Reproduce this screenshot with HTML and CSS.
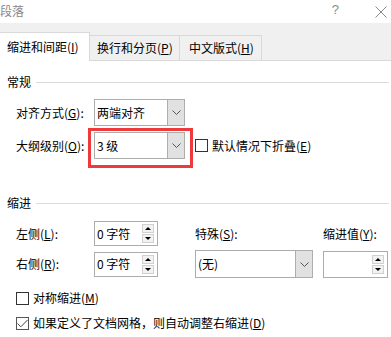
FILE: index.html
```html
<!DOCTYPE html>
<html lang="zh-CN">
<head>
    <meta charset="UTF-8">
    <meta name="viewport" content="width=device-width, initial-scale=1.0">
    <title>段落</title>
    <link rel="stylesheet" href="styles.css">
</head>
<body>

    <div class="dialog">
        <!-- Title bar -->
        <div class="titlebar">
            <span class="title">段落</span>
            <span class="help">?</span>
            <svg class="close" width="12" height="12" viewBox="0 0 12 12">
                <path d="M0.5 0.5 L11.5 11.5 M11.5 0.5 L0.5 11.5" stroke="#8a8a8a" stroke-width="1" fill="none"/>
            </svg>
        </div>

        <!-- Tabs -->
        <div class="tabs">
            <div class="tab active tab-1">缩进和间距(<u>I</u>)</div>
            <div class="tab tab-2">换行和分页(<u>P</u>)</div>
            <div class="tab tab-3">中文版式(<u>H</u>)</div>
        </div>

        <div class="panel">
            <!-- General -->
            <div class="group-title"><span>常规</span><i></i></div>

            <div class="form-rows">
                <div class="form-row">
                    <span class="field-label">对齐方式(<u>G</u>):</span>
                    <div class="select">
                        <span class="select-value">两端对齐</span>
                        <span class="select-btn">
                            <svg width="9" height="5" viewBox="0 0 9 5"><path d="M0.5 0.5 L4.5 4.5 L8.5 0.5" stroke="#555" fill="none"/></svg>
                        </span>
                    </div>
                </div>
                <div class="form-row">
                    <span class="field-label">大纲级别(<u>O</u>):</span>
                    <div class="select highlighted">
                        <span class="select-value">3 级</span>
                        <span class="select-btn">
                            <svg width="9" height="5" viewBox="0 0 9 5"><path d="M0.5 0.5 L4.5 4.5 L8.5 0.5" stroke="#555" fill="none"/></svg>
                        </span>
                    </div>
                    <label class="check collapse">
                        <span class="box"></span>
                        <span>默认情况下折叠(<u>E</u>)</span>
                    </label>
                </div>
            </div>

            <!-- Indent -->
            <div class="group-title indent-title"><span>缩进</span><i></i></div>

            <div class="indent-grid">
                <span class="field-label">左侧(<u>L</u>):</span>
                <div class="spin">
                    <span class="spin-value">0 字符</span>
                    <span class="spin-btns"><b class="up"></b><b class="down"></b></span>
                </div>
                <span class="field-label col-special">特殊(<u>S</u>):</span>
                <span class="field-label col-value">缩进值(<u>Y</u>):</span>

                <span class="field-label">右侧(<u>R</u>):</span>
                <div class="spin">
                    <span class="spin-value">0 字符</span>
                    <span class="spin-btns"><b class="up"></b><b class="down"></b></span>
                </div>
                <div class="select wide col-special">
                    <span class="select-value">(无)</span>
                    <span class="select-btn">
                        <svg width="9" height="5" viewBox="0 0 9 5"><path d="M0.5 0.5 L4.5 4.5 L8.5 0.5" stroke="#555" fill="none"/></svg>
                    </span>
                </div>
                <div class="spin tall col-value">
                    <span class="spin-value"></span>
                    <span class="spin-btns"><b class="up"></b><b class="down"></b></span>
                </div>
            </div>

            <div class="checks">
                <label class="check">
                    <span class="box"></span>
                    <span>对称缩进(<u>M</u>)</span>
                </label>
                <label class="check">
                    <span class="box checked">
                        <svg width="11" height="9" viewBox="0 0 11 9"><path d="M0.5 4.5 L3.8 7.8 L10.5 1" stroke="#444" stroke-width="1" fill="none"/></svg>
                    </span>
                    <span>如果定义了文档网格，则自动调整右缩进(<u>D</u>)</span>
                </label>
            </div>
        </div>
    </div>

</body>
</html>
```

FILE: styles.css
```css
body {
    margin: 0;
    padding: 0;
    background-color: #ffffff;
    font-family: "Noto Sans CJK SC", "Microsoft YaHei", sans-serif;
    font-size: 12px;
    color: #000000;
}

u {
    text-decoration: underline;
    text-underline-offset: 1px;
}

.dialog {
    width: 391px;
    height: 337px;
    overflow: hidden;
}

/* Title bar */
.titlebar {
    height: 23px;
    display: flex;
    align-items: center;
    background-color: #ffffff;
}

.title {
    color: #8a8a8a;
    font-size: 12px;
    line-height: 16px;
    margin-top: -2px;
}

.help {
    margin-left: auto;
    color: #8a8a8a;
    font-family: "Liberation Sans", Arial, sans-serif;
    font-size: 13px;
    line-height: 14px;
    margin-top: -3px;
}

.close {
    margin-left: 36px;
    margin-right: 4px;
    margin-top: 0;
}

/* Tabs */
.tabs {
    height: 37px;
    background-color: #f0f0f0;
    border-bottom: 1px solid #d9d9d9;
    display: flex;
    align-items: flex-end;
    box-sizing: border-box;
    height: 38px;
}

.tab {
    height: 25px;
    box-sizing: border-box;
    border: 1px solid #d9d9d9;
    border-bottom: none;
    border-left: none;
    background-color: #f0f0f0;
    padding-left: 7px;
    line-height: 24px;
    white-space: nowrap;
}

.tab.active {
    height: 29px;
    margin-bottom: -1px;
    background-color: #ffffff;
    line-height: 27px;
}

.tab-1 { width: 90px; border-left: none; }
.tab-2 { width: 90px; }
.tab-3 { width: 82px; padding-left: 9px; }

/* Panel */
.panel {
    padding: 0 2px 0 7px;
}

.group-title {
    display: flex;
    align-items: center;
    margin-top: 13px;
    height: 16px;
    line-height: 16px;
}

.group-title i {
    flex: 1;
    height: 1px;
    background-color: #dcdcdc;
    margin-left: 5px;
}

.indent-title {
    margin-top: 36px;
}

.form-rows {
    margin-top: 9px;
    padding-left: 9px;
    display: flex;
    flex-direction: column;
    gap: 6px;
}

.form-row {
    display: flex;
    align-items: center;
}

.field-label {
    width: 78px;
    line-height: 16px;
    white-space: nowrap;
}

/* Combo box */
.select {
    position: relative;
    width: 91px;
    height: 27px;
    box-sizing: border-box;
    border: 1px solid #adadad;
    display: flex;
    background-color: #ffffff;
}

.select-value {
    flex: 1;
    padding-left: 2px;
    line-height: 25px;
    white-space: nowrap;
}

.select-btn {
    width: 16px;
    background-color: #e1e1e1;
    border-left: 1px solid #adadad;
    display: flex;
    align-items: center;
    justify-content: center;
}

.select.wide {
    width: 118px;
    height: 28px;
}

.select.wide .select-value {
    line-height: 26px;
}

/* Red annotation frame */
.select.highlighted::after {
    content: "";
    position: absolute;
    left: -7px;
    top: -5px;
    width: 105px;
    height: 40px;
    box-sizing: border-box;
    border: 3px solid #ee3a3a;
}

/* Check boxes */
.check {
    display: flex;
    align-items: center;
    line-height: 16px;
    white-space: nowrap;
}

.check .box {
    width: 13px;
    height: 13px;
    box-sizing: border-box;
    border: 1px solid #333333;
    background-color: #ffffff;
    margin-right: 4px;
    display: flex;
    align-items: center;
    justify-content: center;
}

.check .box.checked {
    border-color: #555555;
}

.collapse {
    margin-left: 10px;
}

/* Indent grid */
.indent-grid {
    margin-top: 10px;
    padding-left: 9px;
    display: grid;
    grid-template-columns: 78px 64px 37px 118px 10px 65px;
    grid-template-rows: 25px 28px;
    row-gap: 4px;
    align-items: center;
}

.col-special { grid-column: 4; }
.col-value { grid-column: 6; }

.indent-grid .field-label {
    width: auto;
}

/* Spin box */
.spin {
    width: 64px;
    height: 25px;
    box-sizing: border-box;
    border: 1px solid #acacac;
    display: flex;
    align-items: center;
    background-color: #ffffff;
}

.spin.tall {
    height: 27px;
    width: 65px;
}

.spin-value {
    flex: 1;
    padding-left: 2px;
    line-height: 16px;
    white-space: nowrap;
}

.spin-btns {
    display: flex;
    flex-direction: column;
    gap: 1px;
    margin-right: 3px;
}

.spin-btns b {
    width: 12px;
    height: 9px;
    box-sizing: border-box;
    border: 1px solid #d0d0d0;
    background-color: #f2f2f2;
    position: relative;
}

.spin-btns b::after {
    content: "";
    position: absolute;
    left: 2px;
    width: 0;
    height: 0;
    border-left: 3px solid transparent;
    border-right: 3px solid transparent;
}

.spin-btns .up::after {
    top: 2px;
    border-bottom: 3px solid #000000;
}

.spin-btns .down::after {
    top: 2px;
    border-top: 3px solid #000000;
}

/* Bottom check boxes */
.checks {
    margin-top: 12px;
    padding-left: 9px;
    display: flex;
    flex-direction: column;
    gap: 9px;
}
```
